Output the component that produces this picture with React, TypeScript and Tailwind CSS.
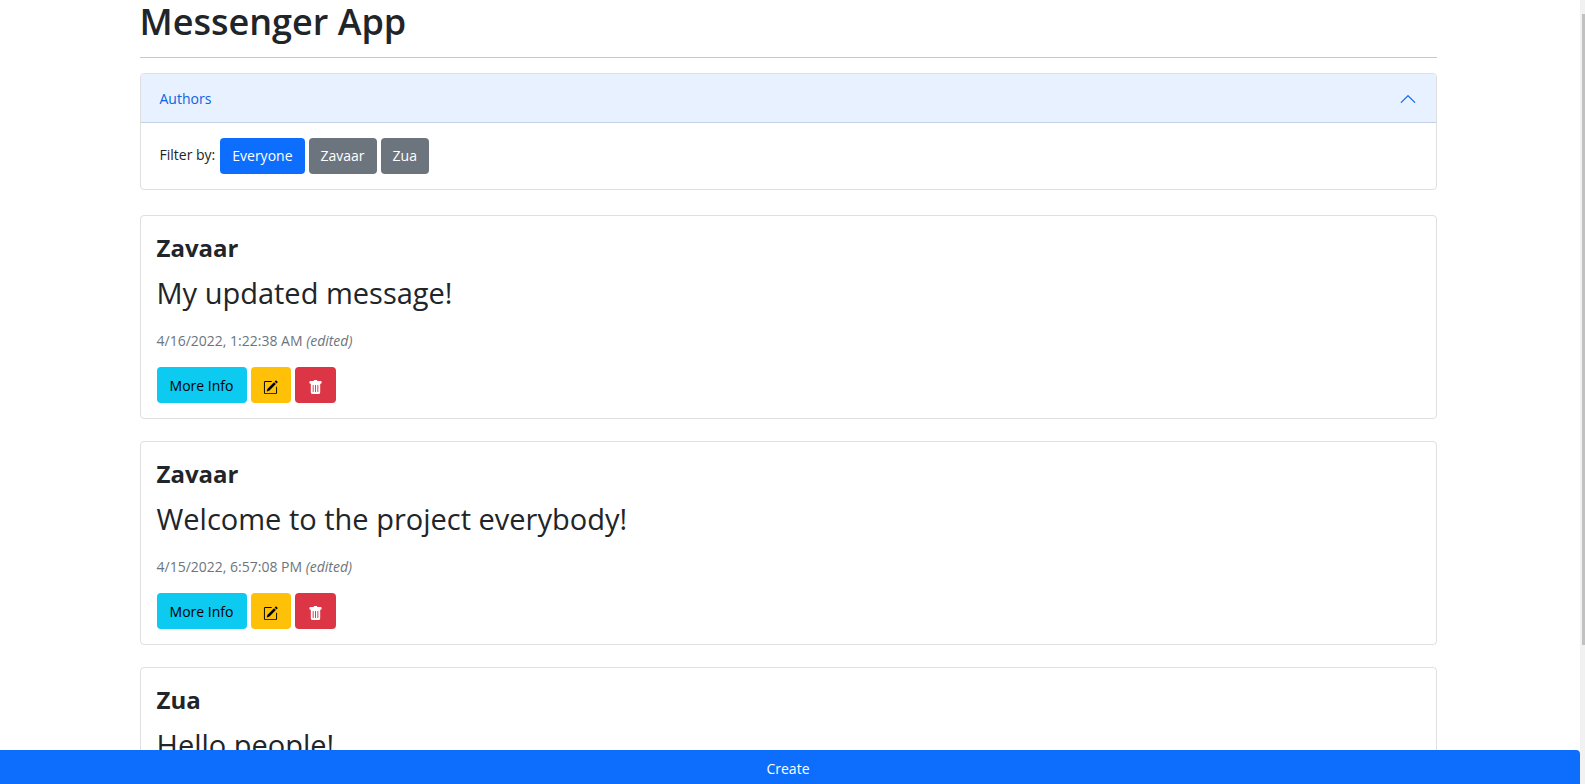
import { useState } from "react";
import { BsChevronUp, BsPencilSquare, BsTrashFill } from "react-icons/bs";

type Message = { id: number; author: string; text: string; date: string };

const messages: Message[] = [
  { id: 1, author: "Zavaar", text: "My updated message!", date: "4/16/2022, 1:22:38 AM" },
  { id: 2, author: "Zavaar", text: "Welcome to the project everybody!", date: "4/15/2022, 6:57:08 PM" },
  { id: 3, author: "Zua", text: "Hello people!", date: "4/15/2022, 6:50:12 PM" },
];

const filters = ["Everyone", "Zavaar", "Zua"];

function MessageCard({ message }: { message: Message }) {
  return (
    <article className="rounded border border-[#dfdfdf] px-4 pt-4 pb-[15px]">
      <h2 className="text-2xl leading-8 font-bold">{message.author}</h2>
      <p className="mt-2 text-[29px] leading-[42px]">{message.text}</p>
      <p className="mt-[17px] text-sm leading-5 text-[#6c757d]">
        {message.date} <em>(edited)</em>
      </p>
      <div className="mt-4 flex gap-1">
        <button className="h-9 w-[90px] rounded bg-[#0dcaf0] pt-px text-sm text-black">More Info</button>
        <button aria-label="Edit" className="flex h-9 w-10 items-center justify-center rounded bg-[#ffc107] pt-1 text-black">
          <BsPencilSquare size={15} />
        </button>
        <button aria-label="Delete" className="flex h-9 w-[41px] items-center justify-center rounded bg-[#dc3545] pt-1 text-white">
          <BsTrashFill size={15} />
        </button>
      </div>
    </article>
  );
}

export default function App() {
  const [author, setAuthor] = useState("Everyone");
  const [open, setOpen] = useState(true);
  const shown = messages.filter((m) => author === "Everyone" || m.author === author);

  return (
    <div className="flex h-screen overflow-hidden bg-white font-['Open_Sans','Noto_Sans',sans-serif] text-sm text-[#212529]">
      <div className="flex min-w-0 flex-1 flex-col">
        <div className="min-h-0 flex-1 overflow-hidden pr-1">
          <main className="mx-auto max-w-[1321px] px-3">
            <h1 className="pt-px pb-3.5 text-4xl leading-[42px] font-semibold">Messenger App</h1>
            <hr className="border-[#c8c9ca]" />
            <section className="mt-[15px] rounded border border-[#dfdfdf]">
              <button
                aria-expanded={open}
                onClick={() => setOpen(!open)}
                className="flex h-[49px] w-full items-center justify-between rounded-t border-b border-[#c3d0e6] bg-[#e7f1ff] px-[19px] pt-px text-[#0c63e4]"
              >
                Authors
                <BsChevronUp size={18} />
              </button>
              {open && (
                <div className="flex items-center gap-1 px-[19px] py-[15px]">
                  <span className="pr-px pb-0.5">Filter by:</span>
                  {filters.map((name) => (
                    <button
                      key={name}
                      onClick={() => setAuthor(name)}
                      className={`h-9 rounded px-3 text-white ${name === author ? "bg-[#0d6efd]" : "bg-[#6c757d]"}`}
                    >
                      {name}
                    </button>
                  ))}
                </div>
              )}
            </section>
            <div className="mt-[25px] flex flex-col gap-[22px]">
              {shown.map((m) => (
                <MessageCard key={m.id} message={m} />
              ))}
            </div>
          </main>
        </div>
        <button className="h-[34px] shrink-0 rounded-tr bg-[#0d6efd] pt-1 pr-1 text-white">Create</button>
      </div>
      <div className="w-[5px] bg-[#f1f1f1] pt-3.5 pl-0.5">
        <div className="h-[82%] bg-[#c1c1c1]" />
      </div>
    </div>
  );
}
